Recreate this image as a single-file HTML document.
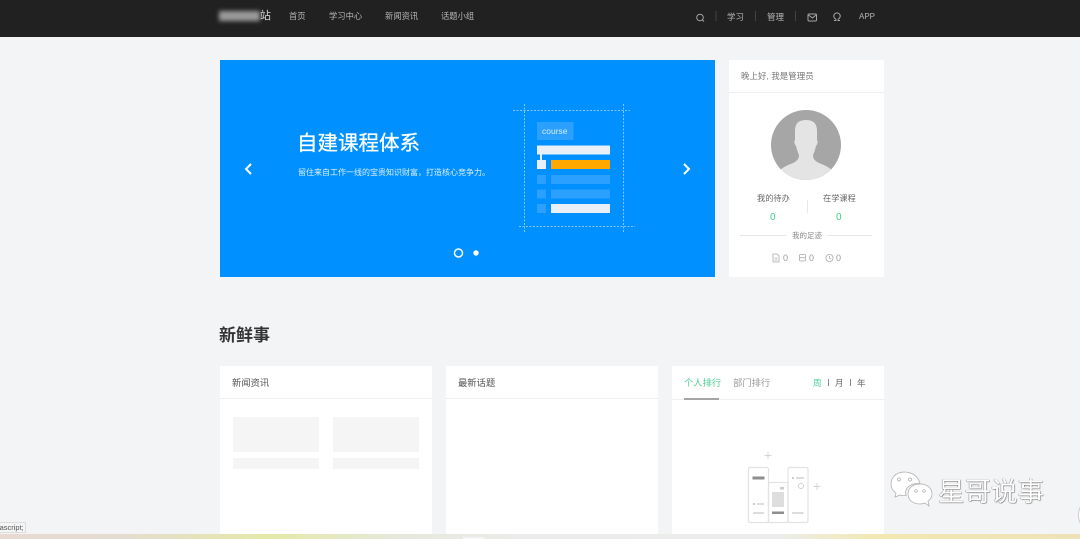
<!DOCTYPE html>
<html lang="zh"><head><meta charset="utf-8"><style>
html,body{margin:0;padding:0}
body{width:1080px;height:539px;overflow:hidden;position:relative;background:#f3f4f6;font-family:"Liberation Sans","Noto Sans CJK SC",sans-serif}
.a{position:absolute;white-space:nowrap}
.n{top:10px;font-size:8.300px;line-height:13px;color:#b5b5b5}
.w{background:#fff}
.s{background:#f5f5f5}
</style></head><body>
<div class="a" style="left:0;top:0;width:1080px;height:37px;background:#212121"></div>
<div class="a" style="left:219px;top:11px;width:41px;height:10px;background:#999;filter:blur(2px)"></div>
<div class="a" style="left:260px;top:9px;font-size:11px;line-height:14px;color:#d5d5d5">站</div>
<div class="a n" style="left:289px">首页</div>
<div class="a n" style="left:329px">学习中心</div>
<div class="a n" style="left:385px">新闻资讯</div>
<div class="a n" style="left:441px">话题小组</div>
<svg class="a" style="left:690px;top:8px" width="190" height="20" fill="none" stroke="#a5a5a5" stroke-width="1">
<circle cx="10" cy="9.500" r="3.300"/><path d="M12.500 12l1.500 1.500"/>
<path d="M26 3v10M65.500 3v10M105.500 3v10" stroke="#444"/>
<rect x="118" y="6" width="8.500" height="7" rx="1"/><path d="M118.500 7l4 3 3.500-3"/>
<path d="M144 12.500h2l-.3-1.500a3.200 3.200 0 1 1 2.600 0l-.3 1.500h2"/>
</svg>
<div class="a n" style="left:727px;top:11px;font-size:8.500px">学习</div>
<div class="a n" style="left:767px;top:11px;font-size:8.500px">管理</div>
<div class="a n" style="left:859px;top:10px;font-size:8px">APP</div>

<div class="a" style="left:220px;top:60px;width:495px;height:217px;background:#0090ff"></div>
<div class="a" style="left:297px;top:130px;font-size:20.500px;line-height:28px;color:#fff;-webkit-text-stroke:.3px #fff">自建课程体系</div>
<div class="a" style="left:298px;top:166px;font-size:8px;line-height:13px;color:#dcefff">留住来自工作一线的宝贵知识财富，打造核心竞争力。</div>
<svg class="a" style="left:220px;top:60px" width="495" height="217" fill="none">
<path d="M31 104l-5 5 5 5" stroke="#fff" stroke-width="2"/>
<path d="M464 104l5 5-5 5" stroke="#fff" stroke-width="2"/>
<circle cx="238.500" cy="193" r="4" stroke="#fff" stroke-width="1.500"/>
<circle cx="256" cy="193" r="2.700" fill="#fff"/>
<g stroke="#a8d8ff" stroke-width=".8" stroke-dasharray="2 1.500">
<path d="M293 50.500h117M299 166.500h116M304.500 44v129M403.500 44v129"/>
</g>
<rect x="317" y="62" width="36.500" height="18" fill="#2ba0ff"/>
<rect x="317" y="85.500" width="73" height="9" fill="#e8eff7"/>
<rect x="320" y="94" width="2" height="6" fill="#e8eff7"/>
<rect x="317" y="100" width="9" height="9" fill="#e8eff7"/>
<rect x="331" y="100" width="59" height="9" fill="#ffa800"/>
<rect x="317" y="115" width="9" height="9" fill="#2ba0ff"/>
<rect x="331" y="115" width="59" height="9" fill="#2ba0ff"/>
<rect x="317" y="129.500" width="9" height="9" fill="#2ba0ff"/>
<rect x="331" y="129.500" width="59" height="9" fill="#2ba0ff"/>
<rect x="317" y="144" width="9" height="9" fill="#2ba0ff"/>
<rect x="331" y="144" width="59" height="9" fill="#e8eff7"/>
</svg>
<div class="a" style="left:542px;top:125px;font-size:8.500px;line-height:12px;color:#d5ebff">course</div>

<div class="a w" style="left:729px;top:60px;width:155px;height:217px"></div>
<div class="a" style="left:729px;top:92px;width:155px;height:1px;background:#eeeff1"></div>
<div class="a" style="left:741px;top:70px;font-size:8.500px;line-height:13px;color:#777">晚上好, 我是管理员</div>
<svg class="a" style="left:771px;top:110px" width="70" height="70">
<defs><clipPath id="c"><circle cx="35" cy="35" r="35"/></clipPath></defs>
<circle cx="35" cy="35" r="35" fill="#a6a6a6"/>
<path clip-path="url(#c)" d="M35 10c-7 0-11 3-11 11v9c-1 1-1 4 1 6 1 4 2 7 3 9 0 4-2 6-6 8-5 2-10 4-14 8l-3 9h60l-3-9c-4-4-9-6-14-8-4-2-6-4-6-8 1-2 2-5 3-9 2-2 2-5 1-6v-9c0-8-4-11-11-11z" fill="#e4e4e4"/>
</svg>
<div class="a" style="left:757px;top:192px;font-size:8.200px;line-height:13px;color:#666">我的待办</div>
<div class="a" style="left:823px;top:192px;font-size:8.200px;line-height:13px;color:#666">在学课程</div>
<div class="a" style="left:807px;top:200px;width:1px;height:13px;background:#e8e8e8"></div>
<div class="a" style="left:770px;top:209px;font-size:10px;line-height:14px;color:#3ccf8a;margin-top:2px">0</div>
<div class="a" style="left:836px;top:209px;font-size:10px;line-height:14px;color:#3ccf8a;margin-top:2px">0</div>
<div class="a" style="left:740px;top:235px;width:46px;height:1px;background:#e6e6e6"></div>
<div class="a" style="left:827px;top:235px;width:45px;height:1px;background:#e6e6e6"></div>
<div class="a" style="left:792px;top:230px;font-size:7.500px;line-height:11px;color:#888">我的足迹</div>
<svg class="a" style="left:770px;top:252px" width="70" height="12" fill="none" stroke="#aaa" stroke-width=".8">
<path d="M3 2h4l2 2v6H3z"/><path d="M4.500 6h3M4.500 8h3"/>
<rect x="29.500" y="2.500" width="6" height="6.500" rx="1"/><path d="M29.500 5.700h6"/>
<circle cx="59.500" cy="6" r="3.600"/><path d="M59.500 4v2.200l1.500 1"/>
</svg>
<div class="a" style="left:783px;top:252px;font-size:9px;line-height:13px;color:#999">0</div>
<div class="a" style="left:809px;top:252px;font-size:9px;line-height:13px;color:#999">0</div>
<div class="a" style="left:836px;top:252px;font-size:9px;line-height:13px;color:#999">0</div>

<div class="a" style="left:219px;top:325px;font-size:17px;line-height:22px;font-weight:bold;color:#333">新鲜事</div>

<div class="a w" style="left:220px;top:366px;width:212px;height:168px"></div>
<div class="a w" style="left:446px;top:366px;width:212px;height:168px"></div>
<div class="a w" style="left:672px;top:366px;width:212px;height:168px"></div>
<div class="a" style="left:220px;top:398px;width:212px;height:1px;background:#eeeff1"></div>
<div class="a" style="left:446px;top:398px;width:212px;height:1px;background:#eeeff1"></div>
<div class="a" style="left:672px;top:399px;width:212px;height:1px;background:#eeeff1"></div>
<div class="a" style="left:232px;top:376px;font-size:9.300px;line-height:14px;color:#555">新闻资讯</div>
<div class="a" style="left:458px;top:376px;font-size:9.300px;line-height:14px;color:#555">最新话题</div>
<div class="a s" style="left:233px;top:417px;width:86px;height:35px"></div>
<div class="a s" style="left:333px;top:417px;width:86px;height:35px"></div>
<div class="a s" style="left:233px;top:458px;width:86px;height:11px"></div>
<div class="a s" style="left:333px;top:458px;width:86px;height:11px"></div>
<div class="a" style="left:684px;top:376px;font-size:9.300px;line-height:14px;color:#4ccf95">个人排行</div>
<div class="a" style="left:733px;top:376px;font-size:9.300px;line-height:14px;color:#999">部门排行</div>
<div class="a" style="left:684px;top:398px;width:35px;height:1.500px;background:#a5a5a5"></div>
<div class="a" style="left:813px;top:376px;font-size:8.500px;line-height:14px;color:#4ccf95">周</div>
<div class="a" style="left:835px;top:376px;font-size:8.500px;line-height:14px;color:#666">月</div>
<div class="a" style="left:857px;top:376px;font-size:8.500px;line-height:14px;color:#666">年</div>
<div class="a" style="left:828px;top:379px;width:1px;height:7px;background:#888"></div>
<div class="a" style="left:850px;top:379px;width:1px;height:7px;background:#888"></div>
<svg class="a" style="left:740px;top:445px" width="90" height="85" fill="none" stroke="#e2e2e2" stroke-width="1">
<path d="M28 7v7M24.500 10.500h7M77 38v7M80.500 41.500h-7" stroke="#d5d5d5"/>
<rect x="8.500" y="22.500" width="20" height="55" rx="1.500" stroke-width="1.200"/>
<rect x="28.500" y="37.500" width="19.500" height="40" stroke-width="1.200"/>
<rect x="48" y="22.500" width="20" height="55" rx="1.500" stroke-width="1.200"/>
<circle cx="61" cy="41" r="2.500" stroke="#d0d0d0"/>
<g stroke="none">
<rect x="12.500" y="31.500" width="12" height="3" fill="#8e8e8e"/>
<rect x="32" y="47" width="12" height="15" fill="#dedede"/>
<rect x="40" y="42" width="4" height="2.500" fill="#ccc"/>
<rect x="32" y="66.500" width="12" height="2.500" fill="#8e8e8e"/>
<rect x="13" y="58" width="2" height="2" fill="#ccc"/><rect x="17" y="58" width="7" height="2" fill="#ddd"/>
<rect x="13" y="67" width="11" height="2" fill="#ddd"/>
<rect x="52" y="32" width="2" height="2" fill="#ccc"/><rect x="56" y="32" width="8" height="2" fill="#ddd"/>
<rect x="52" y="67" width="11.500" height="2" fill="#ddd"/>
</g>
</svg>

<svg class="a" style="left:889px;top:470px" width="50" height="40" fill="#fff" stroke="#aaa" stroke-width=".7">
<path d="M15 2C7 2 2 8 2 14c0 4 2 7 5 9l-1 4 5-2c2 .6 4 .8 6 .6-2-7 4-13 14-12C29 6 23 2 15 2z"/>
<path d="M31 14c-7 0-12 4-12 10s5 10 12 10c2 0 3-.3 5-1l4 3-1-5c3-2 4-4 4-7 0-6-5-10-12-10z"/>
<circle cx="10" cy="9.500" r="1.500" fill="none"/><circle cx="21" cy="9.500" r="1.500" fill="none"/>
<circle cx="27" cy="21" r="1.300" fill="none"/><circle cx="35" cy="21" r="1.300" fill="none"/>
</svg>
<div class="a" style="left:938px;top:476px;font-size:26.500px;line-height:32px;color:#fff;text-shadow:.5px .5px 1px #666,-.5px 0 .5px #888">星哥说事</div>
<div class="a" style="left:1078px;top:503px;width:12px;height:22px;border-radius:50%;background:#fff;border:1px solid #ccc"></div>

<div class="a" style="left:-1px;top:522px;width:27px;height:11px;background:#f5f5f5;border:1px solid #ddd;box-sizing:border-box;font-size:7.500px;line-height:9px;color:#555;overflow:hidden"><span style="margin-left:-10px">javascript;</span></div>
<div class="a" style="left:0;top:534px;width:1080px;height:5px;background:linear-gradient(90deg,#e8d9d2 0,#e4dcd0 120px,#e4e9a8 270px,#e6e8dc 400px,#ebebe9 520px,#ececea 780px,#f2e8b0 880px,#eee2b8 1080px)"></div>
<div class="a" style="left:463px;top:537px;width:22px;height:2px;background:#f5f5f5"></div>
</body></html>
